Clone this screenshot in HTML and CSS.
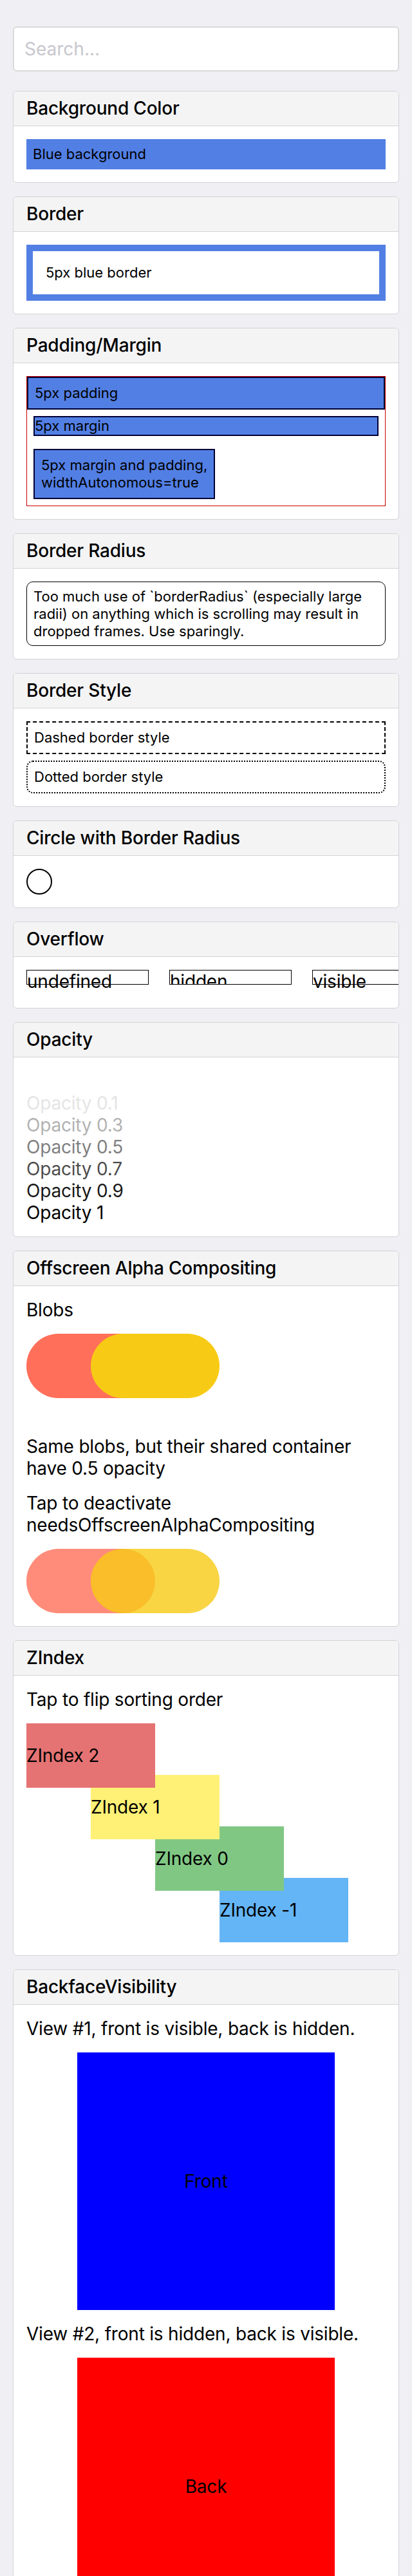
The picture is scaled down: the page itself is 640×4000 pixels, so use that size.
FILE: index.html
```html
<!DOCTYPE html>
<html lang="en">
<head>
<meta charset="utf-8">
<title>View</title>
<link rel="stylesheet" href="styles.css">
</head>
<body>
<div class="page">
  <div class="search-row">
    <div class="search">Search...</div>
  </div>

  <section class="block">
    <div class="block-title">Background Color</div>
    <div class="block-body">
      <div class="bg-blue small">Blue background</div>
    </div>
  </section>

  <section class="block">
    <div class="block-title">Border</div>
    <div class="block-body">
      <div class="thick-border small">5px blue border</div>
    </div>
  </section>

  <section class="block">
    <div class="block-title">Padding/Margin</div>
    <div class="block-body">
      <div class="pm-outer small">
        <div class="box pad">5px padding</div>
        <div class="box mar">5px margin</div>
        <div class="box mar pad auto">5px margin and padding,<br>widthAutonomous=true</div>
      </div>
    </div>
  </section>

  <section class="block">
    <div class="block-title">Border Radius</div>
    <div class="block-body">
      <div class="radius-box small">Too much use of `borderRadius` (especially large<br>radii) on anything which is scrolling may result in<br>dropped frames. Use sparingly.</div>
    </div>
  </section>

  <section class="block">
    <div class="block-title">Border Style</div>
    <div class="block-body">
      <div class="dashed small">Dashed border style</div>
      <div class="dotted small">Dotted border style</div>
    </div>
  </section>

  <section class="block">
    <div class="block-title">Circle with Border Radius</div>
    <div class="block-body">
      <div class="circle"></div>
    </div>
  </section>

  <section class="block">
    <div class="block-title">Overflow</div>
    <div class="block-body">
      <div class="ov-row">
        <div class="ov-box">undefined</div>
        <div class="ov-box clip">hidden</div>
        <div class="ov-box">visible</div>
      </div>
    </div>
  </section>

  <section class="block">
    <div class="block-title">Opacity</div>
    <div class="block-body">
      <div class="txt op0">Opacity 0</div>
      <div class="txt op1">Opacity 0.1</div>
      <div class="txt op3">Opacity 0.3</div>
      <div class="txt op5">Opacity 0.5</div>
      <div class="txt op7">Opacity 0.7</div>
      <div class="txt op9">Opacity 0.9</div>
      <div class="txt">Opacity 1</div>
    </div>
  </section>

  <section class="block">
    <div class="block-title">Offscreen Alpha Compositing</div>
    <div class="block-body stack">
      <div class="txt">Blobs</div>
      <div class="blobs first">
        <div class="blob red"></div>
        <div class="blob yellow"></div>
      </div>
      <div class="txt">Same blobs, but their shared container<br>have 0.5 opacity</div>
      <div class="txt">Tap to deactivate<br>needsOffscreenAlphaCompositing</div>
      <div class="blobs faded">
        <div class="blob red"></div>
        <div class="blob yellow"></div>
      </div>
    </div>
  </section>

  <section class="block">
    <div class="block-title">ZIndex</div>
    <div class="block-body stack">
      <div class="txt">Tap to flip sorting order</div>
      <div class="zstack">
        <div class="zbox z2">ZIndex 2</div>
        <div class="zbox z1">ZIndex 1</div>
        <div class="zbox z0">ZIndex 0</div>
        <div class="zbox zm1">ZIndex -1</div>
      </div>
    </div>
  </section>

  <section class="block">
    <div class="block-title">BackfaceVisibility</div>
    <div class="block-body stack">
      <div class="txt">View #1, front is visible, back is hidden.</div>
      <div class="face front txt">Front</div>
      <div class="txt">View #2, front is hidden, back is visible.</div>
      <div class="face back txt">Back</div>
    </div>
  </section>
</div>
</body>
</html>
```

FILE: styles.css
```css
* { box-sizing: border-box; }

html, body {
  margin: 0;
  padding: 0;
  background: #efeff4;
}

body {
  font-family: Inter, "Noto Sans", "Liberation Sans", sans-serif;
  color: #000;
  font-size: 28px;
  line-height: 34px;
  letter-spacing: -0.2px;
}

.page {
  display: flex;
  flex-direction: column;
  padding-bottom: 40px;
}

.search-row {
  padding: 41px 20px 20px;
}

.search {
  height: 70px;
  background: #fff;
  border: 2px solid #dadada;
  border-radius: 6px;
  padding-left: 16px;
  display: flex;
  align-items: center;
  color: #c7c7cd;
  font-size: 28px;
  letter-spacing: 0;
}

.block {
  margin: 10px 20px 11px;
  background: #fff;
  border: 1px solid #d2d3d6;
  border-radius: 6px;
  overflow: hidden;
}

.block-title {
  background: #f4f4f5;
  border-bottom: 1px solid #d2d3d6;
  padding: 10px 20px;
  font-size: 28px;
  line-height: 33px;
  font-weight: 500;
}

.block-body {
  padding: 20px;
}

.stack {
  display: flex;
  flex-direction: column;
  gap: 20px;
}

.small {
  font-size: 22px;
  line-height: 27px;
  letter-spacing: 0;
}

.txt {
  font-size: 28px;
  line-height: 34px;
}

/* Background color */
.bg-blue {
  background: #527fe4;
  padding: 10px;
}

/* Border */
.thick-border {
  border: 10px solid #527fe4;
  padding: 20px;
}

/* Padding / margin */
.pm-outer {
  border: 1px solid #cc0000;
  display: flex;
  flex-direction: column;
  align-items: stretch;
}

.box {
  background: #527fe4;
  border: 2px solid #000033;
}

.pad { padding: 10px; }
.mar { margin: 10px; }
.auto { align-self: flex-start; }

/* Border radius */
.radius-box {
  border: 1px solid #000;
  border-radius: 10px;
  padding: 8.5px 10px;
}

/* Border style */
.dashed {
  border: 2px dashed #000;
  padding: 10px;
}

.dotted {
  border: 2px dotted #000;
  border-radius: 10px;
  padding: 10px;
  margin-top: 10px;
}

/* Circle */
.circle {
  width: 40px;
  height: 40px;
  border-radius: 50%;
  border: 2px solid #000;
}

/* Overflow */
.ov-row {
  display: flex;
  gap: 32px;
}

.ov-box {
  flex: 0 0 190px;
  height: 23px;
  border: 1px solid #000;
  margin-bottom: 16px;
  white-space: nowrap;
  line-height: 34px;
}

.clip { overflow: hidden; }

/* Opacity */
.op0 { opacity: 0; }
.op1 { opacity: 0.1; }
.op3 { opacity: 0.3; }
.op5 { opacity: 0.5; }
.op7 { opacity: 0.7; }
.op9 { opacity: 0.9; }

/* Offscreen alpha compositing */
.blobs {
  display: flex;
}

.blobs.first {
  margin-bottom: 38px;
}

.blob {
  width: 200px;
  height: 100px;
  border-radius: 50px;
  flex: 0 0 200px;
}

.blob.red { background: #ff6f59; }
.blob.yellow { background: #f7cb15; margin-left: -100px; }

.faded .blob { opacity: 0.8; }

/* ZIndex */
.zstack {
  display: flex;
  flex-direction: column;
  align-items: flex-start;
}

.zbox {
  position: relative;
  width: 200px;
  height: 100px;
  display: flex;
  align-items: center;
  margin-top: -20px;
}

.z2 { margin-top: 0; background: #e57373; z-index: 4; }
.z1 { margin-left: 100px; background: #fff176; z-index: 3; }
.z0 { margin-left: 200px; background: #81c784; z-index: 2; }
.zm1 { margin-left: 300px; background: #64b5f6; z-index: 1; }

/* Backface */
.face {
  width: 400px;
  height: 400px;
  align-self: center;
  display: flex;
  align-items: center;
  justify-content: center;
}

.front { background: #0000ff; }
.back { background: #ff0000; }
```
